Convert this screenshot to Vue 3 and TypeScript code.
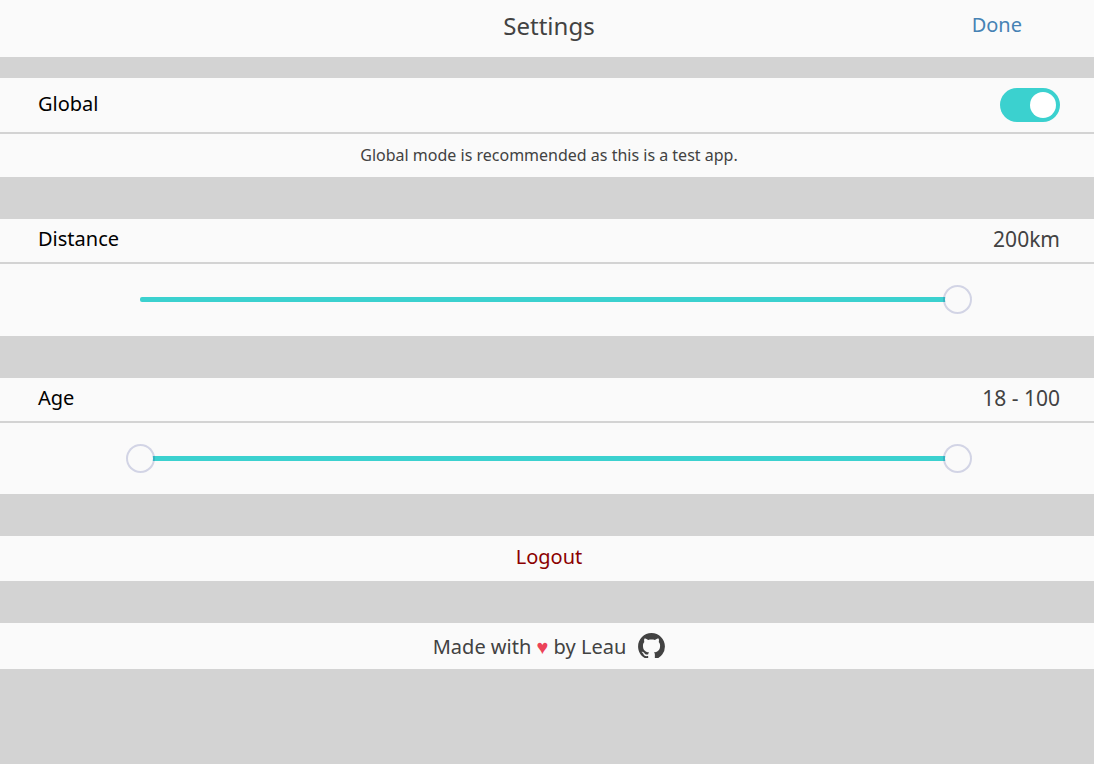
<script setup lang="ts">
import { computed, ref } from 'vue'

const DISTANCE_MIN = 1
const DISTANCE_MAX = 200
const AGE_MIN = 18
const AGE_MAX = 100

const globalMode = ref(true)
const distance = ref(200)
const ageFrom = ref(18)
const ageTo = ref(100)

const percent = (value: number, min: number, max: number): number =>
  ((value - min) / (max - min)) * 100

const distanceFill = computed(() => ({
  left: '0%',
  width: `${percent(distance.value, DISTANCE_MIN, DISTANCE_MAX)}%`,
}))

const ageFill = computed(() => {
  const start = percent(Math.min(ageFrom.value, ageTo.value), AGE_MIN, AGE_MAX)
  const end = percent(Math.max(ageFrom.value, ageTo.value), AGE_MIN, AGE_MAX)
  return { left: `${start}%`, width: `${end - start}%` }
})
</script>

<template>
  <main class="settings">
    <header class="bar">
      <h1 class="title">Settings</h1>
      <button type="button" class="done">Done</button>
    </header>

    <section class="group">
      <div class="row row-toggle">
        <label class="name" for="global">Global</label>
        <input id="global" v-model="globalMode" class="toggle" type="checkbox" role="switch" />
      </div>
      <p class="note">Global mode is recommended as this is a test app.</p>
    </section>

    <section class="group">
      <div class="row">
        <label class="name" for="distance">Distance</label>
        <output class="value" for="distance">{{ distance }}km</output>
      </div>
      <div class="slider">
        <div class="rail">
          <div class="fill" :style="distanceFill"></div>
          <input
            id="distance"
            v-model.number="distance"
            class="range"
            type="range"
            :min="DISTANCE_MIN"
            :max="DISTANCE_MAX"
          />
        </div>
      </div>
    </section>

    <section class="group">
      <div class="row">
        <label class="name" for="age-from">Age</label>
        <output class="value" for="age-from age-to">{{ ageFrom }} - {{ ageTo }}</output>
      </div>
      <div class="slider slider-dual">
        <div class="rail">
          <div class="fill" :style="ageFill"></div>
          <input
            id="age-from"
            v-model.number="ageFrom"
            class="range"
            type="range"
            :min="AGE_MIN"
            :max="AGE_MAX"
          />
          <input
            id="age-to"
            v-model.number="ageTo"
            class="range"
            type="range"
            aria-label="Maximum age"
            :min="AGE_MIN"
            :max="AGE_MAX"
          />
        </div>
      </div>
    </section>

    <button type="button" class="logout">Logout</button>

    <footer class="credit">
      <span class="credit-text">Made with <span class="heart">♥</span> by Leau</span>
      <a class="github" href="#" aria-label="GitHub">
        <svg viewBox="0 0 16 14.9" width="27" height="25" aria-hidden="true">
          <path
            fill="currentColor"
            d="M8 0C3.58 0 0 3.58 0 8c0 3.54 2.29 6.53 5.47 7.59.4.07.55-.17.55-.38 0-.19-.01-.82-.01-1.49-2.01.37-2.53-.49-2.69-.94-.09-.23-.48-.94-.82-1.13-.28-.15-.68-.52-.01-.53.63-.01 1.08.58 1.23.82.72 1.21 1.87.87 2.33.66.07-.52.28-.87.51-1.07-1.78-.2-3.64-.89-3.64-3.95 0-.87.31-1.59.82-2.15-.08-.2-.36-1.02.08-2.12 0 0 .67-.21 2.2.82.64-.18 1.32-.27 2-.27s1.36.09 2 .27c1.53-1.04 2.2-.82 2.2-.82.44 1.1.16 1.92.08 2.12.51.56.82 1.27.82 2.15 0 3.07-1.87 3.75-3.65 3.95.29.25.54.73.54 1.48 0 1.07-.01 1.93-.01 2.2 0 .21.15.46.55.38A8.01 8.01 0 0 0 16 8c0-4.42-3.58-8-8-8z"
          />
        </svg>
      </a>
    </footer>
  </main>
</template>

<style>
body {
  margin: 0;
  background: #d3d3d3;
}
</style>

<style scoped>
.settings {
  display: flex;
  flex-direction: column;
  gap: 42px;
  color: #424242;
  font-family: 'Noto Sans', 'Open Sans', sans-serif;
  font-size: 20px;
  line-height: 28px;
}

.settings * {
  box-sizing: border-box;
}

.bar,
.group,
.logout,
.credit {
  background: #fafafa;
}

.bar {
  display: grid;
  grid-template-columns: 1fr auto 1fr;
  align-items: start;
  height: 57px;
  margin-bottom: -21px;
  padding: 12px 34px 0 38px;
}

.title {
  grid-column: 2;
  margin: 0;
  font-size: 24px;
  font-weight: 400;
  line-height: 28px;
}

.done {
  justify-self: end;
  margin-right: 38px;
  padding: 0;
  border: 0;
  background: none;
  color: #4682b4;
  font: inherit;
  line-height: 26px;
  cursor: pointer;
}

.row {
  display: flex;
  align-items: center;
  justify-content: space-between;
  height: 45px;
  padding: 0 34px 4px 38px;
  border-bottom: 2px solid #d3d3d3;
}

.row-toggle {
  height: 56px;
  padding-bottom: 0;
}

.row-toggle .name {
  padding-bottom: 2px;
}

.name {
  color: #000;
}

.value {
  font-size: 21px;
}

.toggle {
  display: flex;
  justify-content: flex-start;
  appearance: none;
  width: 60px;
  height: 34px;
  margin: 0;
  padding: 4px;
  border-radius: 17px;
  background: #ccc;
  cursor: pointer;
}

.toggle::before {
  content: '';
  width: 26px;
  height: 26px;
  border-radius: 50%;
  background: #fff;
}

.toggle:checked {
  justify-content: flex-end;
  background: #3bd1cf;
}

.note {
  margin: 0;
  padding: 7px 34px 8px 38px;
  font-size: 16px;
  text-align: center;
}

.slider {
  display: flex;
  align-items: center;
  justify-content: center;
  height: 72px;
  padding: 0 34px 1px 38px;
}

.slider-dual {
  height: 71px;
  padding-bottom: 0;
}

.rail {
  position: relative;
  width: 80%;
  height: 5px;
}

.fill {
  position: absolute;
  top: 0;
  height: 5px;
  border-radius: 2px;
  background: #3bd1cf;
}

.range {
  position: absolute;
  top: -12px;
  left: -14px;
  appearance: none;
  width: calc(100% + 28px);
  height: 29px;
  margin: 0;
  background: none;
  pointer-events: none;
}

.range::-webkit-slider-thumb {
  appearance: none;
  width: 29px;
  height: 29px;
  border: 2px solid rgba(50, 60, 145, 0.2);
  border-radius: 50%;
  background: #fafafa;
  background-clip: padding-box;
  cursor: pointer;
  pointer-events: auto;
}

.logout {
  height: 45px;
  padding: 0 34px 4px 38px;
  border: 0;
  color: #8b0000;
  font: inherit;
  text-align: center;
  cursor: pointer;
}

.credit {
  display: flex;
  align-items: center;
  justify-content: center;
  gap: 12px;
  height: 46px;
  padding: 0 34px 1px 38px;
}

.credit-text {
  padding-top: 2px;
}

.heart {
  color: #ec4258;
}

.github {
  display: flex;
  color: #424242;
}
</style>
